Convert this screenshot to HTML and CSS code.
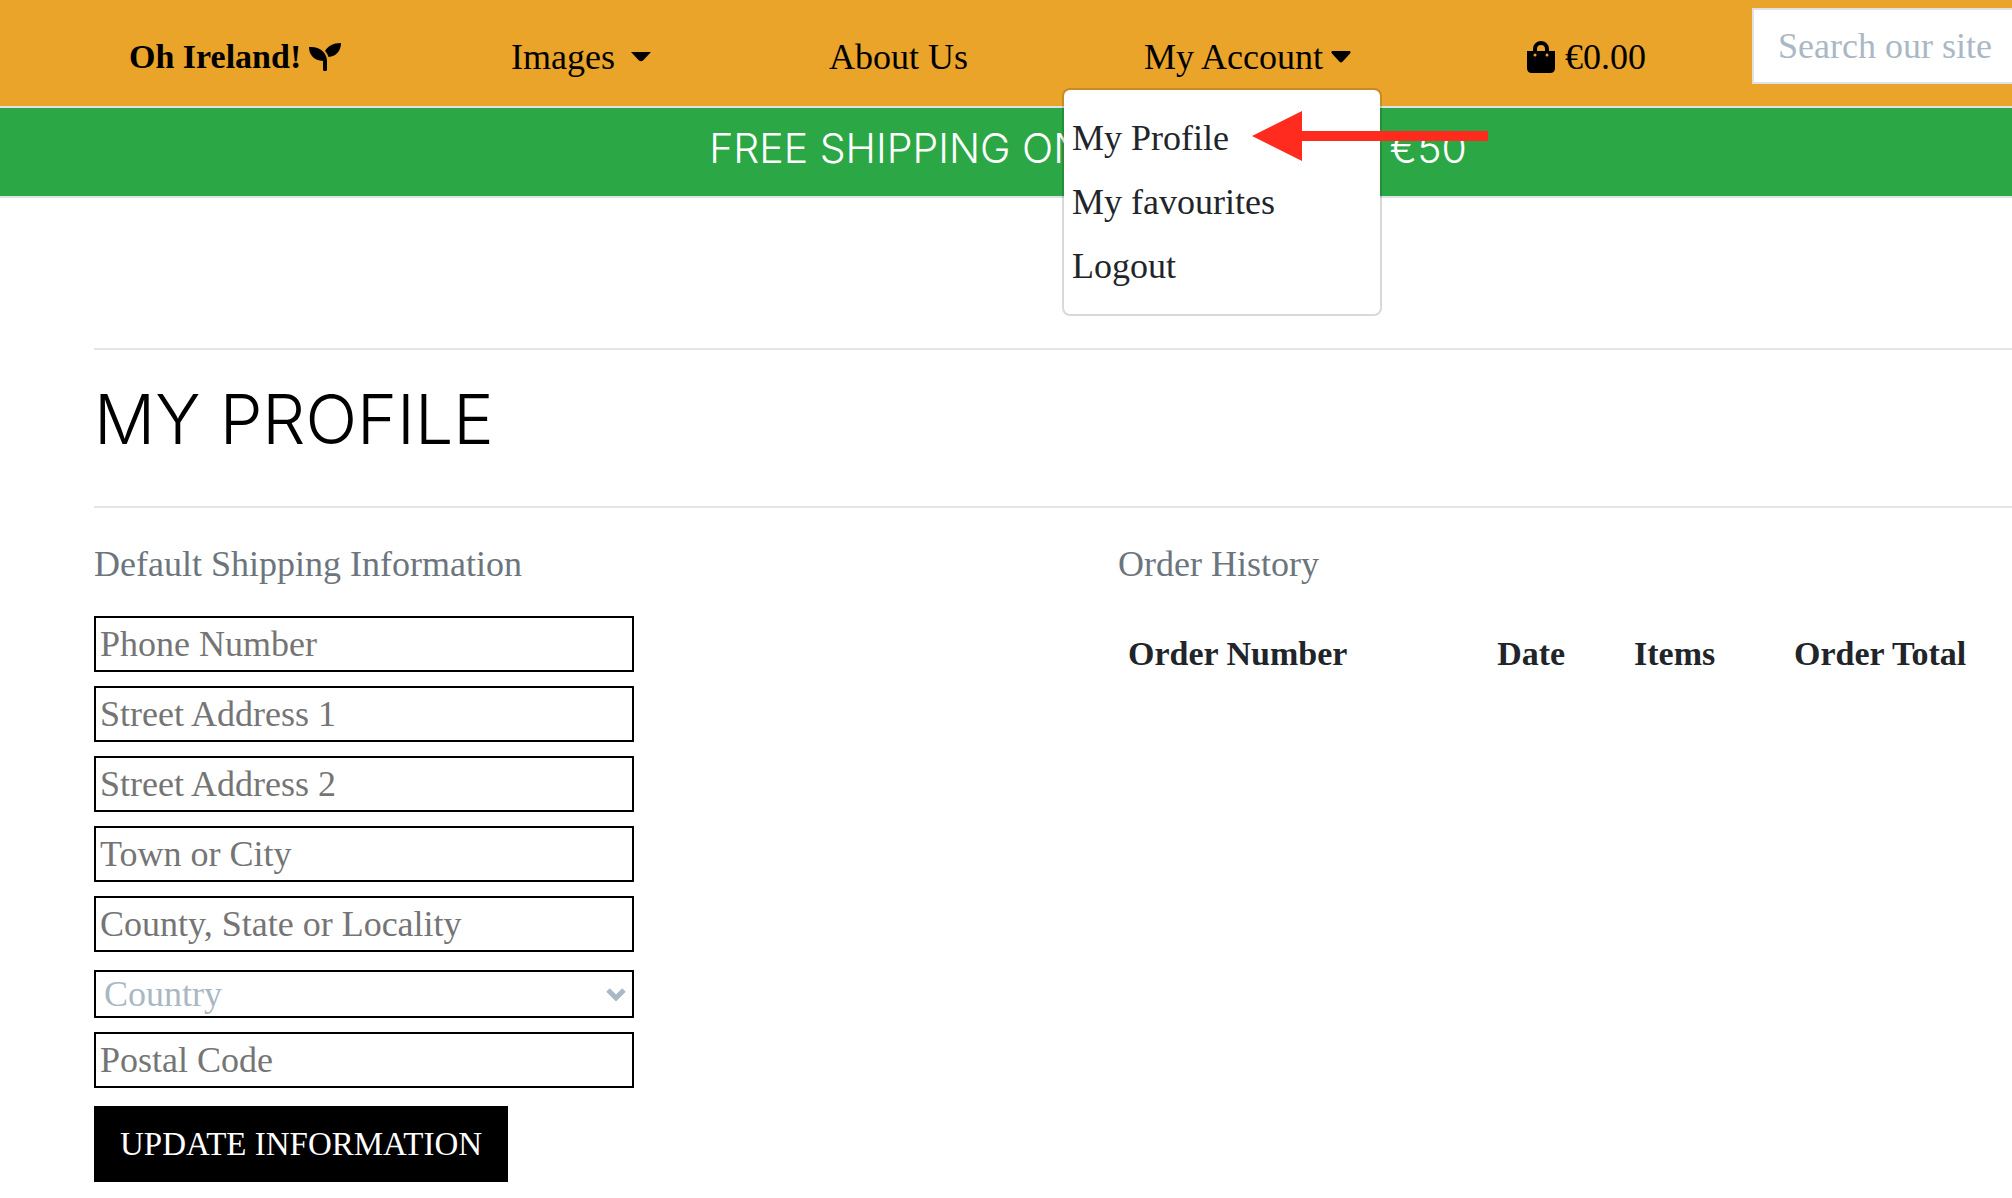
FILE: index.html
```html
<!DOCTYPE html>
<html lang="en">
<head>
  <meta charset="utf-8">
  <meta name="viewport" content="width=device-width, initial-scale=1">
  <title>My Profile | Oh Ireland!</title>
  <link rel="stylesheet" href="styles.css">
</head>
<body>
  <header class="site-header">
    <nav class="navbar" aria-label="Main">
      <a class="brand" href="#">Oh Ireland!
        <svg class="icon-seedling" viewBox="0 0 32 28" aria-hidden="true">
          <path d="M0 4C10 3 18 9 18 18V26.500Q18 28 16.500 28H15.500Q14 28 14 26.500V18C5 17.500 0 12 0 4Z"/>
          <path d="M32 0C32 8 27 13.500 19.500 14C18.800 11.500 17.500 9.500 16 8C19 3 24 0 32 0Z"/>
        </svg>
      </a>
      <a class="nav-link" href="#">Images
        <svg class="caret-images" viewBox="0 0 20 10" aria-hidden="true"><path d="M0 0H20L12 8.500Q10 10 8 8.500Z"/></svg>
      </a>
      <a class="nav-link" href="#">About Us</a>
      <div class="dropdown">
        <a class="nav-link" href="#" aria-expanded="true">My Account
          <svg class="caret-account" viewBox="0 0 20 12" aria-hidden="true"><path d="M1.500 0H18.500Q20.500 .5 19 2.500L11.500 10.800Q10 12.300 8.500 10.800L1 2.500Q-.5 .5 1.500 0Z"/></svg>
        </a>
        <div class="dropdown-menu">
          <a class="dropdown-item" href="#">My Profile</a>
          <a class="dropdown-item" href="#">My favourites</a>
          <a class="dropdown-item" href="#">Logout</a>
          <svg class="pointer" viewBox="0 0 236 50" aria-hidden="true"><path d="M0 25L50 0V20H236V30H50V50Z"/></svg>
        </div>
      </div>
      <a class="nav-link bag" href="#">
        <svg class="icon-bag" viewBox="0 0 28 32" aria-hidden="true">
          <path fill-rule="evenodd" d="M0 10H6V8A8 8 0 0 1 22 8V10H28V27Q28 32 23 32H5Q0 32 0 27ZM10 10H18V8A4 4 0 0 0 10 8ZM8 12.500A1.500 1.500 0 1 0 8 15.500A1.500 1.500 0 1 0 8 12.500ZM20 12.500A1.500 1.500 0 1 0 20 15.500A1.500 1.500 0 1 0 20 12.500Z"/>
        </svg>
        €0.00
      </a>
      <form class="search">
        <input class="search-input" type="search" placeholder="Search our site" aria-label="Search our site">
      </form>
    </nav>
    <p class="banner">FREE SHIPPING ON ORDERS OVER €50</p>
  </header>

  <main class="content">
    <h1 class="page-title">MY PROFILE</h1>
    <div class="columns">
      <section>
        <h2 class="section-title">Default Shipping Information</h2>
        <form class="profile-form">
          <input class="field" type="text" placeholder="Phone Number" aria-label="Phone Number">
          <input class="field" type="text" placeholder="Street Address 1" aria-label="Street Address 1">
          <input class="field" type="text" placeholder="Street Address 2" aria-label="Street Address 2">
          <input class="field" type="text" placeholder="Town or City" aria-label="Town or City">
          <input class="field" type="text" placeholder="County, State or Locality" aria-label="County, State or Locality">
          <div class="select-wrap">
            <select class="country" aria-label="Country"><option>Country</option></select>
            <svg class="chevron" viewBox="0 0 20 13" aria-hidden="true"><path d="M2 2L10 10L18 2"/></svg>
          </div>
          <input class="field" type="text" placeholder="Postal Code" aria-label="Postal Code">
          <button class="submit" type="submit">UPDATE INFORMATION</button>
        </form>
      </section>
      <section>
        <h2 class="section-title">Order History</h2>
        <table class="orders">
          <thead>
            <tr>
              <th class="col-number" scope="col">Order Number</th>
              <th class="col-date" scope="col">Date</th>
              <th class="col-items" scope="col">Items</th>
              <th scope="col">Order Total</th>
            </tr>
          </thead>
        </table>
      </section>
    </div>
  </main>
</body>
</html>
```
FILE: styles.css
```css
*,
*::before,
*::after {
  box-sizing: border-box;
}

body {
  margin: 0;
  background: #fff;
  color: #212529;
  font-family: "Liberation Serif", serif;
  font-size: 36px;
  line-height: 48px;
}

a {
  color: inherit;
  text-decoration: none;
}

input,
select,
button {
  margin: 0;
  border-radius: 0;
  font: inherit;
}

svg {
  fill: currentColor;
}

/* Header */
.navbar {
  display: grid;
  grid-template-columns: 382fr 318fr 315fr 383fr 225fr 260fr;
  align-items: center;
  height: 108px;
  padding-left: 129px;
  border-bottom: 2px solid #dee2e6;
  background: #e9a429;
  color: #000;
}

.brand,
.nav-link {
  display: flex;
  align-items: center;
  padding-top: 8px;
  white-space: nowrap;
}

.brand {
  gap: 8px;
  font-size: 34px;
  font-weight: 700;
}

.icon-seedling {
  width: 32px;
  height: 28px;
}

.caret-images {
  width: 20px;
  height: 10px;
  margin-left: 16px;
}

.caret-account {
  width: 20px;
  height: 12px;
  margin-left: 8px;
}

.bag {
  gap: 10px;
}

.icon-bag {
  width: 28px;
  height: 32px;
}

.dropdown {
  position: relative;
}

.dropdown-menu {
  position: absolute;
  z-index: 10;
  top: 63px;
  right: 100%;
  width: 320px;
  margin-right: -238px;
  padding: 16px 0;
  border: 2px solid rgba(0, 0, 0, .15);
  border-radius: 8px;
  background: #fff;
  background-clip: padding-box;
  color: #212529;
}

.dropdown-item {
  display: block;
  padding: 8px;
}

.pointer {
  position: absolute;
  top: 21px;
  left: 188px;
  width: 236px;
  height: 50px;
  fill: #fe2b1e;
}

.search {
  align-self: start;
  padding-top: 8px;
}

.search-input {
  display: block;
  width: 100%;
  height: 76px;
  padding: 0 0 0 24px;
  border: 2px solid #dee2e6;
  border-right: 0;
  background: #fff;
  appearance: none;
}

.search-input::-webkit-search-cancel-button {
  display: none;
}

.search-input::placeholder {
  color: #aab7c4;
}

.banner {
  height: 90px;
  margin: 0;
  padding: 16px 0 24px 164px;
  border-bottom: 2px solid #dee2e6;
  background: #2ba745;
  color: #fff;
  font-family: Inter, sans-serif;
  font-size: 41px;
  font-weight: 300;
  text-align: center;
}

/* Profile */
.content {
  padding: 150px 0 16px 94px;
}

.page-title {
  margin: 0;
  padding: 30px 0 48px;
  border: solid #e5e5e5;
  border-width: 2px 0;
  color: #000;
  font-family: Inter, sans-serif;
  font-size: 68px;
  font-weight: 300;
  line-height: 78px;
}

.columns {
  display: grid;
  grid-template-columns: 1024fr 894fr;
  padding-top: 32px;
}

.section-title {
  margin: 0;
  color: #6c757d;
  font-size: 36px;
  font-weight: 400;
}

.profile-form {
  display: flex;
  flex-direction: column;
  align-items: flex-start;
  gap: 14px;
  max-width: 540px;
  padding-top: 28px;
}

.field {
  width: 100%;
  height: 56px;
  padding: 0 4px;
  border: 2px solid #000;
  background: #fff;
}

.field::placeholder {
  color: #757575;
}

.select-wrap {
  position: relative;
  width: 100%;
  padding-top: 4px;
}

.country {
  display: block;
  width: 100%;
  height: 48px;
  padding: 0 8px;
  border: 2px solid #000;
  background: #fff;
  color: #aab7c4;
  line-height: 44px;
  appearance: none;
}

.chevron {
  position: absolute;
  top: 22px;
  right: 8px;
  width: 20px;
  height: 13px;
  fill: none;
  stroke: #aab7c4;
  stroke-width: 5;
  pointer-events: none;
}

.submit {
  height: 76px;
  margin-top: 4px;
  padding: 0 24px;
  border: 2px solid #000;
  background: #000;
  color: #fff;
  font-size: 33px;
}

.orders {
  width: 100%;
  margin-top: 32px;
  border-collapse: collapse;
  table-layout: fixed;
  font-size: 34px;
}

.orders th {
  padding: 10px;
  text-align: left;
  white-space: nowrap;
}

.col-number {
  width: 41.3%;
}

.col-date {
  width: 15.3%;
}

.col-items {
  width: 17.9%;
}
```
